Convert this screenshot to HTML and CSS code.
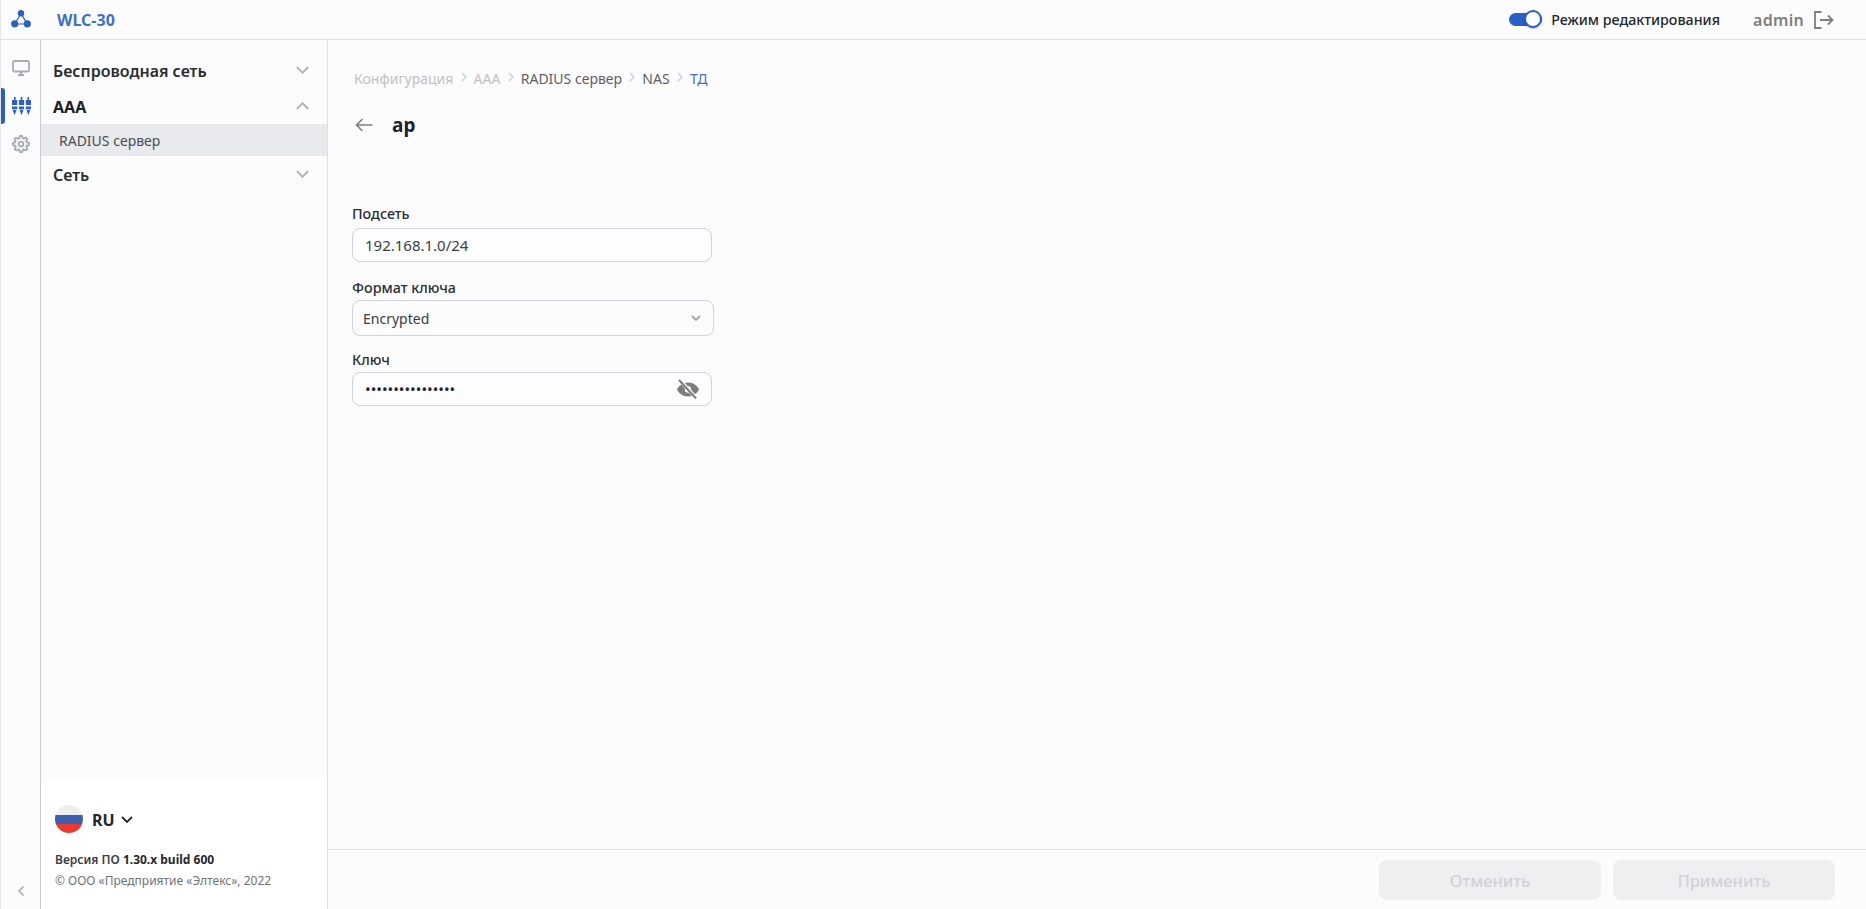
FILE: index.html
```html
<!DOCTYPE html>
<html lang="ru">
<head>
<meta charset="utf-8">
<title>WLC-30</title>
<link rel="stylesheet" href="styles.css">
</head>
<body>
<div class="app">
  <header class="topbar">
    <div class="logo-cell">
      <svg class="logo" viewBox="0 0 20 18" width="20" height="18"><path d="M10 3.500 L3.800 14 H16.200 Z" fill="none" stroke="#2b5fc7" stroke-width="1.200"/><circle cx="10" cy="3.300" r="3.200" fill="#2b5fc7"/><circle cx="3.700" cy="13.800" r="3.600" fill="#2b5fc7"/><circle cx="16.300" cy="13.800" r="3.600" fill="#2b5fc7"/></svg>
    </div>
    <div class="brand">WLC-30</div>
    <div class="top-right">
      <div class="toggle"><span class="knob"></span></div>
      <span class="edit-label">Режим редактирования</span>
      <span class="user">admin</span>
      <svg class="logout" viewBox="0 0 20 18" width="20" height="18" fill="none" stroke="#808080" stroke-width="1.800"><path d="M7.500 1H1v16h6.500"/><path d="M6 9h13M14 4.500 18.500 9 14 13.500"/></svg>
    </div>
  </header>
  <div class="body">
    <nav class="rail">
      <div class="rail-main">
        <div class="rail-item">
          <svg viewBox="0 0 18 16" width="18" height="16" fill="none" stroke="#a6adba" stroke-width="1.800"><rect x="1" y="1" width="16" height="10.500" rx="1.500"/><path d="M6 15h6M9 12v3" stroke-width="2"/></svg>
        </div>
        <div class="rail-item">
          <svg viewBox="0 0 19 18" width="19" height="18" fill="#2b5fc7"><path d="M2 0h1.600v3H2zM8.700 0h1.600v3H8.700zM15.400 0h1.600v3h-1.600z"/><rect x="0" y="3" width="5.200" height="5"/><rect x="6.900" y="3" width="5.200" height="5"/><rect x="13.800" y="3" width="5.200" height="5"/><rect x="0" y="9.500" width="5.200" height="2.800"/><rect x="6.900" y="9.500" width="5.200" height="2.800"/><rect x="13.800" y="9.500" width="5.200" height="2.800"/><path d="M.6 13h4L2.600 18zM7.500 13h4l-2 5zM14.400 13h4l-2 5z"/></svg>
          <span class="rail-mark"></span>
        </div>
        <div class="rail-item">
          <svg viewBox="0 0 24 24" width="18" height="18" fill="none" stroke="#a6adba" stroke-width="2.600" stroke-linejoin="round"><circle cx="12" cy="12" r="3.200"/><path d="M19.400 15a1.650 1.650 0 0 0 .33 1.820l.06.06a2 2 0 1 1-2.830 2.830l-.06-.06a1.650 1.650 0 0 0-2.800 1.170V21a2 2 0 1 1-4 0v-.09a1.650 1.650 0 0 0-2.800-1.170l-.06.06a2 2 0 1 1-2.830-2.830l.06-.06a1.650 1.650 0 0 0-1.170-2.800H3a2 2 0 1 1 0-4h.09a1.650 1.650 0 0 0 1.170-2.800l-.06-.06a2 2 0 1 1 2.830-2.830l.06.06a1.650 1.650 0 0 0 2.800-1.170V3a2 2 0 1 1 4 0v.09a1.650 1.650 0 0 0 2.800 1.170l.06-.06a2 2 0 1 1 2.830 2.830l-.06.06a1.650 1.650 0 0 0 1.170 2.800H21a2 2 0 1 1 0 4h-.09a1.650 1.650 0 0 0-1.510 1z"/></svg>
        </div>
      </div>
      <div class="rail-collapse">
        <svg viewBox="0 0 8 12" width="8" height="12" fill="none" stroke="#a6adba" stroke-width="1.600"><path d="M6.500 1.500 2 6l4.500 4.500"/></svg>
      </div>
    </nav>
    <aside class="sidebar">
      <div class="menu">
        <div class="menu-head">
          <span>Беспроводная сеть</span>
          <svg class="chev" viewBox="0 0 14 8" width="13" height="8"><path d="M1 1l6 6 6-6"/></svg>
        </div>
        <div class="menu-head strong">
          <span>AAA</span>
          <svg class="chev" viewBox="0 0 14 8" width="13" height="8"><path d="M1 7l6-6 6 6"/></svg>
        </div>
        <div class="menu-sub">RADIUS сервер</div>
        <div class="menu-head">
          <span>Сеть</span>
          <svg class="chev" viewBox="0 0 14 8" width="13" height="8"><path d="M1 1l6 6 6-6"/></svg>
        </div>
      </div>
      <div class="side-foot">
        <div class="lang">
          <svg class="flag" viewBox="0 0 28 28" width="28" height="28"><defs><clipPath id="fc"><circle cx="14" cy="14" r="14"/></clipPath></defs><g clip-path="url(#fc)"><rect width="28" height="10" fill="#eeeeee"/><rect y="10" width="28" height="9.500" fill="#3f5fb0"/><rect y="19" width="28" height="9" fill="#ea3a32"/></g></svg>
          <span class="lang-code">RU</span>
          <svg class="lang-chev" viewBox="0 0 12 8" width="12" height="8"><path d="M1 1l5 5 5-5"/></svg>
        </div>
        <div class="version">Версия ПО <b>1.30.x build 600</b></div>
        <div class="copy">© ООО «Предприятие «Элтекс», 2022</div>
      </div>
    </aside>
    <main class="main">
      <div class="content">
        <div class="crumbs">
          <span class="c-muted">Конфигурация</span><svg class="sep" viewBox="0 0 6 10" width="6" height="10"><path d="M1 1l4 4-4 4"/></svg>
          <span class="c-muted">AAA</span><svg class="sep" viewBox="0 0 6 10" width="6" height="10"><path d="M1 1l4 4-4 4"/></svg>
          <span class="c-dark">RADIUS сервер</span><svg class="sep" viewBox="0 0 6 10" width="6" height="10"><path d="M1 1l4 4-4 4"/></svg>
          <span class="c-dark">NAS</span><svg class="sep" viewBox="0 0 6 10" width="6" height="10"><path d="M1 1l4 4-4 4"/></svg>
          <span class="c-current">ТД</span>
        </div>
        <div class="title-row">
          <svg class="back" viewBox="0 0 18 14" width="18" height="14" fill="none" stroke="#808080" stroke-width="1.600"><path d="M17.500 7H1.500M7.500 1 1.500 7l6 6"/></svg>
          <h1>ap</h1>
        </div>
        <form class="form">
          <div class="field">
            <label>Подсеть</label>
            <div class="input">192.168.1.0/24</div>
          </div>
          <div class="field f2">
            <label>Формат ключа</label>
            <div class="select"><span>Encrypted</span>
              <svg viewBox="0 0 10 6" width="10" height="6" fill="none" stroke="#a3a3ad" stroke-width="1.800"><path d="M1 1l4 4 4-4"/></svg>
            </div>
          </div>
          <div class="field f3">
            <label>Ключ</label>
            <div class="input pass"><span class="dots">••••••••••••••••</span>
              <svg viewBox="0 0 24 20" width="24" height="20"><path d="M12 3.500C6.500 3.500 2.500 7 1 10.500c1.500 3.500 5.500 7 11 7s9.500-3.500 11-7c-1.500-3.500-5.500-7-11-7z" fill="#7d7d7d"/><circle cx="12" cy="10.500" r="3.200" fill="#fcfcfc"/><path d="M3.500 .8 20.500 19.500" stroke="#fcfcfc" stroke-width="3.600"/><path d="M3 1 20 19.500" stroke="#7d7d7d" stroke-width="2"/></svg>
            </div>
          </div>
        </form>
      </div>
      <footer class="actions">
        <button class="btn" type="button">Отменить</button>
        <button class="btn" type="button">Применить</button>
      </footer>
    </main>
  </div>
</div>
</body>
</html>
```
FILE: styles.css
```css
* { box-sizing: border-box; }
html, body { margin: 0; height: 100%; overflow: hidden; }
body { font-family: "Noto Sans", sans-serif; color: #24272e; background: #fcfcfc; }
.app { height: 909px; display: flex; flex-direction: column; border-left: 1px solid #e4e6ea; }

.topbar { height: 40px; flex: none; display: flex; align-items: center; background: #fcfcfc; border-bottom: 1px solid #e2e3e6; }
.logo-cell { width: 39px; display: flex; justify-content: center; margin-top: -1px; }
.brand { margin-left: 17px; font-size: 16px; font-weight: 700; color: #3f6fd1; }
.top-right { margin-left: auto; display: flex; align-items: center; padding-right: 32px; }
.toggle { width: 33px; height: 13px; background: #2b5fc7; border-radius: 7px; position: relative; }
.knob { position: absolute; right: 0; top: -3px; width: 18px; height: 18px; border-radius: 50%; background: #fff; border: 2px solid #2b5fc7; box-shadow: 0 1px 2px rgba(0,0,0,.25); }
.edit-label { margin-left: 9px; font-size: 14.25px; color: #24272e; font-weight: 500; }
.user { margin-left: 33px; font-size: 16px; font-weight: 600; color: #808080; letter-spacing: .3px; }
.logout { margin-left: 10px; }

.body { flex: 1; display: flex; min-height: 0; }
.rail { width: 40px; flex: none; display: flex; flex-direction: column; border-right: 1px solid #c9ccd3; background: #fcfcfc; }
.rail-main { flex: 1; padding-top: 10px; }
.rail-item { height: 36px; display: flex; align-items: center; justify-content: center; position: relative; margin-bottom: 2px; padding-left: 1px; }
.rail-mark { position: absolute; left: 0; top: 0; width: 4px; height: 36px; background: #2b5fc7; border-radius: 0 3px 3px 0; }
.rail-collapse { height: 24px; flex: none; display: flex; justify-content: center; align-items: flex-start; }

.sidebar { width: 287px; flex: none; display: flex; flex-direction: column; border-right: 1px solid #dfe0e4; background: #fcfcfc; }
.menu { flex: 1; padding-top: 13px; }
.menu-head { height: 36px; display: flex; align-items: center; justify-content: space-between; padding: 0 18px 0 12px; font-size: 16px; font-weight: 600; color: #2a2d33; }
.menu-head.strong { font-weight: 700; height: 35px; color: #1e2026; }
.chev { fill: none; stroke: #a6adba; stroke-width: 2; margin-bottom: 2px; }
.menu-sub { height: 32px; line-height: 32px; background: #e9eaed; padding: 1px 0 0 18px; font-size: 14px; color: #4a4d55; margin-bottom: 1px; }
.side-foot { height: 128px; flex: none; background: #fff; padding: 24px 0 0 14px; }
.lang { display: flex; align-items: center; height: 28px; }
.lang-code { margin-left: 9px; padding-top: 2px; font-size: 16px; font-weight: 700; color: #24272e; }
.lang-chev { margin: 2px 0 0 6px; fill: none; stroke: #24272e; stroke-width: 1.800; }
.version { margin-top: 18px; font-size: 12px; font-weight: 600; color: #3a3d44; line-height: 17px; }
.version b { font-weight: 700; color: #24272e; }
.copy { margin-top: 5px; font-size: 12px; color: #6f737b; line-height: 16px; }

.main { flex: 1; min-width: 0; display: flex; flex-direction: column; background: #fcfcfc; }
.content { flex: 1; padding: 0 0 0 24px; }
.crumbs { display: flex; align-items: center; margin-top: 28px; margin-left: 2px; height: 20px; font-size: 14px; }
.sep { margin: 0 7px 0 7.300px; fill: none; stroke: #bcd0f2; stroke-width: 1.300; position: relative; top: -1px; }
.c-muted { color: #bfc2c9; }
.c-dark { color: #5c6068; }
.c-current { color: #3f6fd1; }
.title-row { display: flex; align-items: center; margin-top: 23px; height: 28px; }
.back { margin-left: 3px; }
h1 { margin: 0 0 0 19px; font-size: 19px; font-weight: 700; color: #1f2230; }
.form { margin-top: 65px; }
.field label { display: block; font-size: 14.300px; font-weight: 500; color: #2a2d33; line-height: 20px; }
.input { margin-top: 4px; width: 360px; height: 34px; border: 1px solid #cfd3de; border-radius: 8px; background: #fdfdfd; padding: 0 12px; display: flex; align-items: center; justify-content: space-between; font-size: 15px; color: #3a3d44; }
.select { margin-top: 2px; width: 362px; height: 36px; border: 1px solid #cfd3de; border-radius: 8px; padding: 0 12px 0 10px; display: flex; align-items: center; justify-content: space-between; font-size: 14px; color: #3a3d44; }
.f2 { margin-top: 16px; }
.f3 { margin-top: 14px; }
.f3 .input { margin-top: 2px; padding-right: 11px; }
.dots { font-size: 15px; color: #1f2230; }

.actions { height: 60px; flex: none; border-top: 1px solid #e4e3ea; display: flex; justify-content: flex-end; gap: 12px; padding: 10px 31px 0 0; }
.btn { width: 222px; height: 40px; border: 0; border-radius: 8px; background: #eeeff1; color: #cfd2d9; font-family: inherit; font-size: 16.500px; font-weight: 500; }
```
